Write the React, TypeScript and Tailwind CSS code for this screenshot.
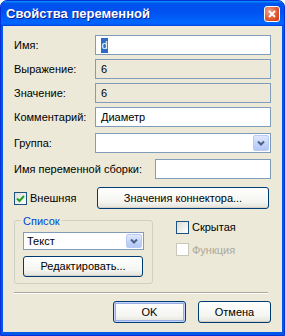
function Chevron() {
    return (
        <span className="absolute right-[1px] top-[1px] bottom-[1px] w-[16px] rounded-[2px] border border-[#bacbf6] bg-[linear-gradient(to_bottom,#dfe8fd,#c1d3fb_60%,#b4c8f6)] flex items-center justify-center">
            <svg width="8" height="6" viewBox="0 0 8 6">
                <polyline points="1,1.5 4,4.5 7,1.5" fill="none" stroke="#4d6185" strokeWidth="2" />
            </svg>
        </span>
    );
}

function Check({ checked, disabled }: { checked?: boolean; disabled?: boolean }) {
    return (
        <span
            className={
                disabled
                    ? "w-[13px] h-[13px] border border-[#cac8bb] bg-white flex items-center justify-center"
                    : "w-[13px] h-[13px] border border-[#1c5180] bg-[linear-gradient(135deg,#dcdcd7,#ffffff)] flex items-center justify-center"
            }
        >
            {checked && (
                <svg width="9" height="9" viewBox="0 0 9 9">
                    <polyline points="1,4.5 3.5,7 8,2" fill="none" stroke="#21a121" strokeWidth="2" />
                </svg>
            )}
        </span>
    );
}

function XpButton({ children, className, def }: { children: React.ReactNode; className: string; def?: boolean }) {
    return (
        <div
            className={
                "rounded-[3px] border border-[#003c74] bg-[linear-gradient(to_bottom,#ffffff,#f4f4f0_70%,#e3e2da)] flex items-center justify-center " +
                (def ? "shadow-[inset_0_0_0_1px_#c2d3fc,inset_0_0_0_2px_#97aee2] " : "shadow-[inset_0_-1px_0_#d6d0c5] ") +
                className
            }
        >
            {children}
        </div>
    );
}

export default function App() {
    return (
        <div className="w-[285px] h-[336px] flex flex-col rounded-t-[7px] bg-[#0058e6] border border-[#0831d9] font-['Liberation_Sans',sans-serif] text-[11px] text-black overflow-hidden">
            <div className="h-[25px] shrink-0 flex items-center justify-between pl-[5px] pr-[4px] bg-[linear-gradient(to_bottom,#0997ff_0%,#0053ee_10%,#0050ee_40%,#0066ff_85%,#0060ff_93%,#003dd7_100%)]">
                <span className="text-white font-bold text-[13px] [text-shadow:1px_1px_0_#0a1e8c]">Свойства переменной</span>
                <span className="w-[16px] h-[16px] rounded-[3px] border border-white bg-[radial-gradient(circle_at_30%_30%,#f0a08a,#e0552b_60%,#c63a14)] flex items-center justify-center">
                    <svg width="8" height="8" viewBox="0 0 8 8">
                        <path d="M1 1 L7 7 M7 1 L1 7" stroke="white" strokeWidth="2" />
                    </svg>
                </span>
            </div>
            <div className="flex-1 mx-[2px] mb-[3px] bg-[#ece9d8] flex flex-col pl-[11px] pr-[11px]">
                <div className="mt-[9px] h-[20px] flex items-center">
                    <span className="w-[81px]">Имя:</span>
                    <div className="flex-1 h-[20px] border border-[#7f9db9] bg-white flex items-center pl-[5px]">
                        <span className="bg-[#316ac5] text-white leading-[15px] px-[0.5px]">d</span>
                    </div>
                </div>
                <div className="mt-[4px] h-[20px] flex items-center">
                    <span className="w-[81px]">Выражение:</span>
                    <div className="flex-1 h-[20px] border border-[#7f9db9] flex items-center pl-[5px]">6</div>
                </div>
                <div className="mt-[4px] h-[20px] flex items-center">
                    <span className="w-[81px]">Значение:</span>
                    <div className="flex-1 h-[20px] border border-[#7f9db9] flex items-center pl-[5px]">6</div>
                </div>
                <div className="mt-[4px] h-[20px] flex items-center">
                    <span className="w-[81px]">Комментарий:</span>
                    <div className="flex-1 h-[20px] border border-[#7f9db9] bg-white flex items-center pl-[5px]">Диаметр</div>
                </div>
                <div className="mt-[6px] h-[20px] flex items-center">
                    <span className="w-[81px]">Группа:</span>
                    <div className="relative flex-1 h-[20px] border border-[#7f9db9] bg-white">
                        <Chevron />
                    </div>
                </div>
                <div className="mt-[6px] h-[20px] flex items-center">
                    <span className="w-[141px]">Имя переменной сборки:</span>
                    <div className="flex-1 h-[20px] border border-[#7f9db9] bg-white"></div>
                </div>
                <div className="mt-[8px] h-[22px] flex items-center">
                    <div className="w-[83px] flex items-center gap-[3px]">
                        <Check checked />
                        <span>Внешняя</span>
                    </div>
                    <XpButton className="w-[172px] h-[22px]">Значения коннектора...</XpButton>
                </div>
                <div className="mt-[5px] flex">
                    <div className="w-[139px] h-[64px] mt-[6px] relative rounded-[3px] border border-[#d0d0bf] px-[8px] pt-[11px]">
                        <span className="absolute -top-[8px] left-[6px] px-[2px] bg-[#ece9d8] text-[#0046d5]">Список</span>
                        <div className="relative h-[18px] border border-[#7f9db9] bg-white flex items-center pl-[3px]">
                            Текст
                            <Chevron />
                        </div>
                        <XpButton className="mt-[6px] h-[21px] w-[120px]">Редактировать...</XpButton>
                    </div>
                    <div className="ml-[23px] mt-[5px] flex flex-col gap-[6px]">
                        <div className="flex items-center gap-[3px]">
                            <Check />
                            <span>Скрытая</span>
                        </div>
                        <div className="flex items-center gap-[3px] text-[#aca899]">
                            <Check disabled />
                            <span>Функция</span>
                        </div>
                    </div>
                </div>
                <div className="mt-[8px] h-[2px] border-t border-[#aca899] bg-white mr-[3px]"></div>
                <div className="mt-[7px] flex justify-end gap-[12px]">
                    <XpButton def className="w-[73px] h-[22px]">OK</XpButton>
                    <XpButton className="w-[73px] h-[22px]">Отмена</XpButton>
                </div>
            </div>
        </div>
    );
}
